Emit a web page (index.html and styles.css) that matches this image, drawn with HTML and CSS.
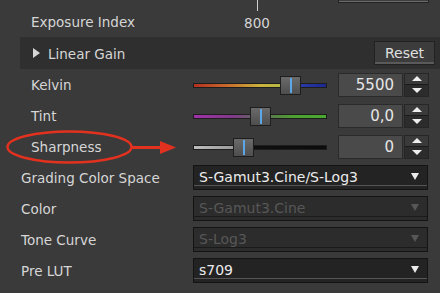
FILE: index.html
```html
<!DOCTYPE html>
<html lang="en">
<head>
    <meta charset="UTF-8">
    <title>Color Settings</title>
    <link rel="stylesheet" href="styles.css">
</head>
<body>
    <div class="panel">
        <!-- Exposure index -->
        <div class="row row-top">
            <div class="label">Exposure Index</div>
            <div class="scale">
                <div class="tick"></div>
                <div class="scale-value">800</div>
            </div>
            <div class="top-stub"><div class="stub-btn"></div></div>
        </div>

        <!-- Linear gain section -->
        <div class="section">
            <span class="caret"></span>
            <span class="section-title">Linear Gain</span>
            <button type="button" class="btn-reset">Reset</button>
        </div>

        <div class="row">
            <div class="label">Kelvin</div>
            <div class="slider">
                <div class="track track-kelvin"></div>
                <div class="thumb" style="left: 87px;"></div>
            </div>
            <div class="spin">
                <div class="spin-value">5500</div>
                <div class="spin-arrows"><span class="up"></span><span class="down"></span></div>
            </div>
        </div>

        <div class="row">
            <div class="label">Tint</div>
            <div class="slider">
                <div class="track track-tint"></div>
                <div class="thumb" style="left: 57px;"></div>
            </div>
            <div class="spin">
                <div class="spin-value">0,0</div>
                <div class="spin-arrows"><span class="up"></span><span class="down"></span></div>
            </div>
        </div>

        <div class="row">
            <div class="label">Sharpness</div>
            <div class="slider">
                <div class="track track-sharp"></div>
                <div class="thumb" style="left: 40px;"></div>
            </div>
            <div class="spin">
                <div class="spin-value">0</div>
                <div class="spin-arrows"><span class="up"></span><span class="down"></span></div>
            </div>
        </div>

        <!-- Grading -->
        <div class="row row-wide">
            <div class="label">Grading Color Space</div>
            <div class="dropdown">S-Gamut3.Cine/S-Log3<span class="arrow"></span></div>
        </div>
        <div class="row row-wide">
            <div class="label">Color</div>
            <div class="dropdown disabled">S-Gamut3.Cine<span class="arrow"></span></div>
        </div>
        <div class="row row-wide">
            <div class="label">Tone Curve</div>
            <div class="dropdown disabled">S-Log3<span class="arrow"></span></div>
        </div>
        <div class="row row-wide">
            <div class="label">Pre LUT</div>
            <div class="dropdown">s709<span class="arrow"></span></div>
        </div>

        <!-- annotation -->
        <svg class="callout" width="440" height="293" viewBox="0 0 440 293">
            <ellipse cx="69.5" cy="147" rx="62" ry="15.5" fill="none" stroke="#e2321f" stroke-width="2.5"/>
            <line x1="131" y1="147.5" x2="162" y2="147.5" stroke="#e2321f" stroke-width="3"/>
            <polygon points="160,141 176,147.5 160,154" fill="#e2321f"/>
        </svg>
    </div>
</body>
</html>
```

FILE: styles.css
```css
body {
    margin: 0;
    background: #3a3a3a;
    font-family: "DejaVu Sans", Verdana, sans-serif;
    font-size: 13.5px;
    color: #d6d6d6;
}

.panel {
    position: relative;
    width: 440px;
    height: 293px;
    overflow: hidden;
}

.row {
    display: flex;
    align-items: center;
    height: 31px;
}

.label {
    width: 162px;
    padding-left: 31px;
    flex-shrink: 0;
    white-space: nowrap;
}

.row-wide .label {
    width: 172px;
    padding-left: 21px;
}

/* exposure index */
.row-top {
    height: 37px;
    align-items: flex-start;
}

.row-top .label {
    padding-top: 14px;
}

.scale {
    width: 128px;
    display: flex;
    flex-direction: column;
    align-items: center;
}

.tick {
    width: 1px;
    height: 11px;
    background: #cfcfcf;
}

.scale-value {
    margin-top: 4px;
}

.top-stub {
    margin-left: 17px;
    width: 91px;
}

.stub-btn {
    height: 2px;
    border: 1px solid #222;
    border-top: none;
    box-shadow: inset 0 -1px 0 #6a6a6a;
    background: #3e3e3e;
}

/* linear gain */
.section {
    display: flex;
    align-items: center;
    height: 32px;
    margin-left: 20px;
    background: #2f2f2f;
}

.caret {
    width: 0;
    height: 0;
    margin-left: 13px;
    border-top: 5px solid transparent;
    border-bottom: 5px solid transparent;
    border-left: 7px solid #d6d6d6;
}

.section-title {
    margin-left: 8px;
    margin-top: 2px;
}

.btn-reset {
    margin-left: auto;
    margin-right: 5px;
    width: 61px;
    height: 24px;
    padding: 0;
    background: #3c3c3c;
    border: 1px solid #222;
    box-shadow: inset 0 -2px 0 #5a5a5a;
    color: #e0e0e0;
    font-family: inherit;
    font-size: 14px;
}

/* sliders */
.slider {
    position: relative;
    width: 134px;
    height: 20px;
}

.track {
    margin-top: 8px;
    height: 3px;
    border: 1px solid #1d1d1d;
}

.track-kelvin {
    background: linear-gradient(to right, #b3301f, #c86a2c 25%, #c9b23c 50%, #b8b844 65%, #2b3aa6 80%, #1c2890);
}

.track-tint {
    background: linear-gradient(to right, #a030a8, #803a88 30%, #6a5a6a 42%, #5a7a4a 58%, #4ea032 75%, #4aa830);
}

.track-sharp {
    background: linear-gradient(to right, #bdbdbd, #9a9a9a 30%, #101010 31%, #0c0c0c);
}

.thumb {
    position: absolute;
    top: 1px;
    width: 19px;
    height: 17px;
    border: 1px solid #1e1e1e;
    background: linear-gradient(to bottom, #6a6a6a, #4e4e4e);
}

.thumb::after {
    content: "";
    position: absolute;
    left: 9px;
    top: 1px;
    bottom: 1px;
    width: 2px;
    background: #5aa6e6;
}

/* spin boxes */
.spin {
    display: flex;
    margin-left: 11px;
    height: 24px;
}

.spin-value {
    width: 55px;
    padding-right: 8px;
    text-align: right;
    line-height: 22px;
    font-size: 15px;
    color: #e6e6e6;
    background: #4a4a4a;
    border: 1px solid #2a2a2a;
}

.spin-arrows {
    display: flex;
    flex-direction: column;
    width: 25px;
    margin-left: 1px;
    background: #2c2c2c;
    border: 1px solid #262626;
    box-sizing: border-box;
}

.spin-arrows span {
    flex: 1;
    display: flex;
    align-items: center;
    justify-content: center;
}

.spin-arrows .up {
    border-bottom: 1px solid #1a1a1a;
    background: #3a3a3a;
}

.spin-arrows .up::before {
    content: "";
    border-left: 5px solid transparent;
    border-right: 5px solid transparent;
    border-bottom: 5px solid #eee;
}

.spin-arrows .down::before {
    content: "";
    border-left: 5px solid transparent;
    border-right: 5px solid transparent;
    border-top: 5px solid #eee;
}

/* dropdowns */
.dropdown {
    position: relative;
    width: 228px;
    height: 23px;
    padding-left: 5px;
    line-height: 22px;
    font-size: 14px;
    color: #ececec;
    background: #232323;
    border: 1px solid #141414;
    box-shadow: inset 0 -3px 0 #232323, inset 0 -4px 0 #555;
}

.dropdown.disabled {
    color: #575757;
    background: #2c2c2c;
    box-shadow: inset 0 -3px 0 #2c2c2c, inset 0 -4px 0 #1a1a1a;
}

.dropdown .arrow {
    position: absolute;
    right: 8px;
    top: 7px;
    border-left: 4px solid transparent;
    border-right: 4px solid transparent;
    border-top: 7px solid #ececec;
}

.dropdown.disabled .arrow {
    border-top-color: #575757;
}

.callout {
    position: absolute;
    top: 0;
    left: 0;
    pointer-events: none;
}
```
